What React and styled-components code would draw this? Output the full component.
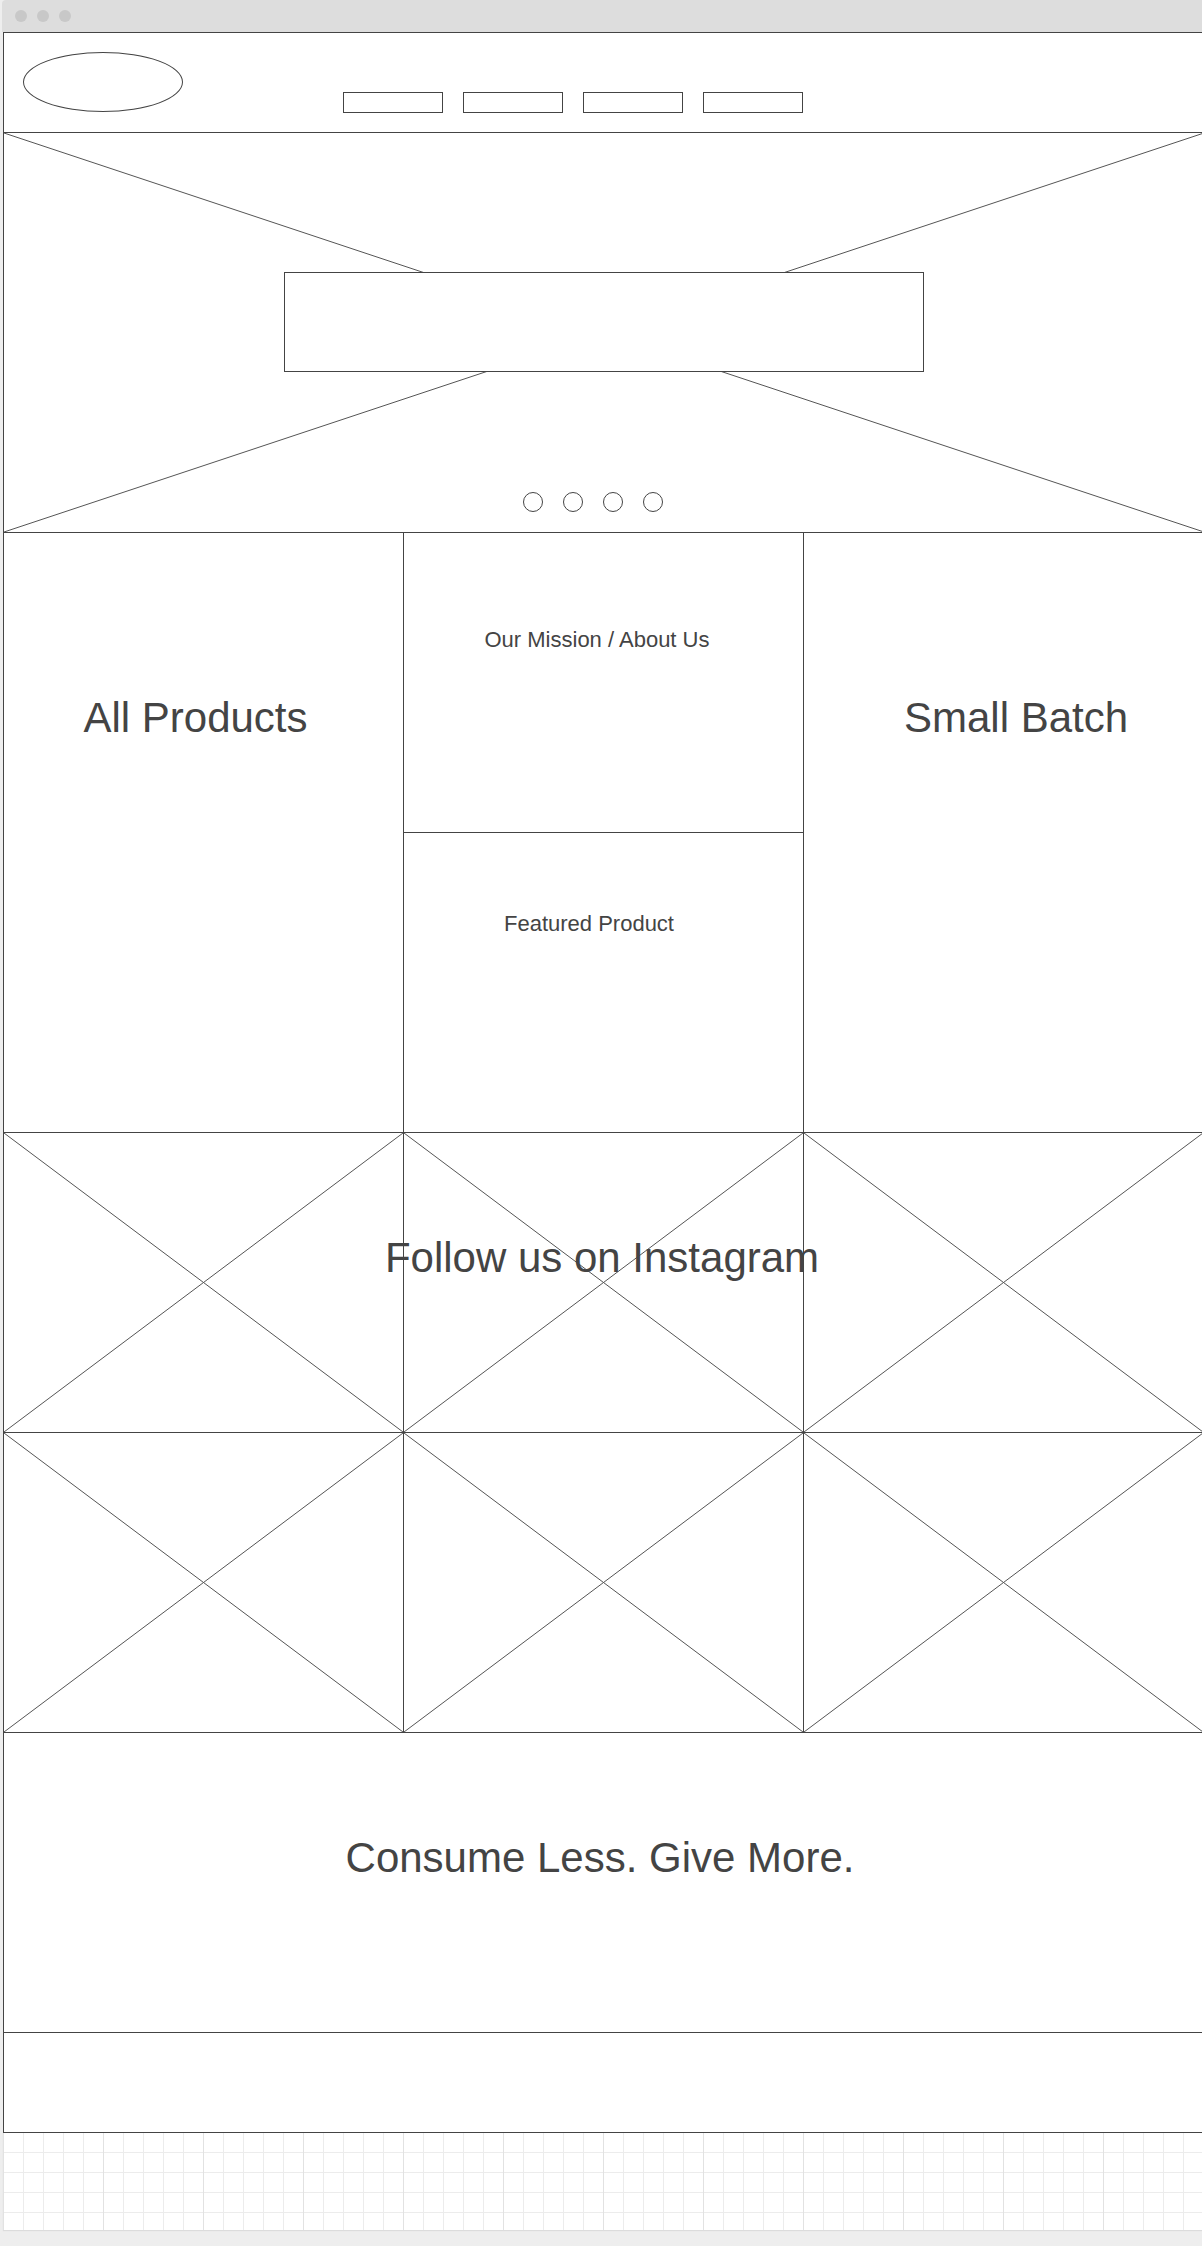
import React from 'react'
import styled, { createGlobalStyle } from 'styled-components'

const line = '#444'
const thin = '#555'

const GlobalStyle = createGlobalStyle`
    html, body {
        margin: 0;
        padding: 0;
        background: #eeeeee;
        overflow-x: hidden;
    }
    body {
        font-family: "Liberation Sans", Arial, sans-serif;
        color: #444;
    }
`

const Page = styled.div`
    width: 1202px;
    height: 2246px;
    overflow: hidden;
`

const Window = styled.div`
    margin-left: 3px;
    width: 1202px;
`

const TitleBar = styled.div`
    height: 32px;
    margin-left: -1px;
    background: #dddddd;
    border-radius: 4px 4px 0 0;
    display: flex;
    align-items: center;
    gap: 10px;
    padding-left: 13px;
    box-sizing: border-box;
`

const Light = styled.span`
    width: 12px;
    height: 12px;
    border-radius: 50%;
    background: #c8c8c8;
`

const Frame = styled.div`
    border: 1px solid ${line};
    background: #fff;
`

const Header = styled.header`
    height: 100px;
    box-sizing: border-box;
    border-bottom: 1px solid ${line};
    display: flex;
    align-items: flex-start;
`

const Logo = styled.div`
    width: 160px;
    height: 60px;
    box-sizing: border-box;
    border: 1px solid ${line};
    border-radius: 50%;
    margin: 19px 0 0 19px;
`

const Nav = styled.nav`
    display: flex;
    gap: 20px;
    margin: 59px 0 0 160px;
`

const NavItem = styled.div`
    width: 100px;
    height: 21px;
    box-sizing: border-box;
    border: 1px solid ${line};
`

const Hero = styled.section`
    position: relative;
    height: 400px;
    box-sizing: border-box;
    border-bottom: 1px solid ${line};
    display: flex;
    flex-direction: column;
    align-items: center;
    padding-top: 139px;
`

const Cross = styled.svg`
    position: absolute;
    inset: 0;
    width: 100%;
    height: 100%;
    pointer-events: none;
`

const Banner = styled.div`
    position: relative;
    width: 640px;
    height: 100px;
    box-sizing: border-box;
    border: 1px solid ${line};
    background: #fff;
`

const Dots = styled.div`
    position: relative;
    display: flex;
    gap: 20px;
    margin: 120px 22px 0 0;
`

const Dot = styled.span`
    width: 20px;
    height: 20px;
    box-sizing: border-box;
    border: 1px solid ${line};
    border-radius: 50%;
    background: #fff;
`

const Tiles = styled.section`
    display: grid;
    grid-template-columns: repeat(3, 400px);
    grid-template-rows: 300px 300px;
`

const Cell = styled.div`
    position: relative;
    box-sizing: border-box;
    border-right: 1px solid ${line};
    border-bottom: 1px solid ${line};
    grid-row: ${p => (p.$tall ? 'span 2' : 'auto')};
    padding-top: ${p => p.$pt || 0}px;
    padding-left: ${p => (p.$dx > 0 ? p.$dx * 2 : 0)}px;
    padding-right: ${p => (p.$dx < 0 ? -p.$dx * 2 : 0)}px;
    text-align: center;
`

const Label = styled.div`
    position: relative;
    font-size: ${p => p.$size}px;
    line-height: 1;
    white-space: nowrap;
    color: #444;
`

const Insta = styled.section`
    position: relative;
    display: grid;
    grid-template-columns: repeat(3, 400px);
    grid-template-rows: 300px 300px;
`

const InstaTitle = styled(Label)`
    position: absolute;
    top: 104px;
    left: 0;
    right: 4px;
    text-align: center;
`

const Slogan = styled.section`
    height: 300px;
    box-sizing: border-box;
    border-bottom: 1px solid ${line};
    padding: 104px 8px 0 0;
    text-align: center;
`

const Footer = styled.footer`
    height: 99px;
`

const Canvas = styled.div`
    margin-left: 3px;
    height: 97px;
    background-color: #fff;
    background-image:
        linear-gradient(to right, #e2e2e2 1px, transparent 1px),
        linear-gradient(to right, #ececec 1px, transparent 1px),
        linear-gradient(to bottom, #ececec 1px, transparent 1px);
    background-size: 100px 100px, 20px 20px, 20px 20px;
    background-position: 0 0, 0 0, 0 -1px;
    box-shadow: 0 1px 1px #dcdcdc;
`

function XMark() {
    return (
        <Cross viewBox="0 0 100 100" preserveAspectRatio="none">
            <line x1="0" y1="0" x2="100" y2="100" stroke={thin} strokeWidth="1" vectorEffect="non-scaling-stroke" />
            <line x1="100" y1="0" x2="0" y2="100" stroke={thin} strokeWidth="1" vectorEffect="non-scaling-stroke" />
        </Cross>
    )
}

export default function App() {
    return (
        <Page>
            <GlobalStyle />
            <Window>
                <TitleBar>
                    <Light />
                    <Light />
                    <Light />
                </TitleBar>
                <Frame>
                    <Header>
                        <Logo />
                        <Nav>
                            {[0, 1, 2, 3].map(i => <NavItem key={i} />)}
                        </Nav>
                    </Header>

                    <Hero>
                        <XMark />
                        <Banner />
                        <Dots>
                            {[0, 1, 2, 3].map(i => <Dot key={i} />)}
                        </Dots>
                    </Hero>

                    <Tiles>
                        <Cell $tall $pt={164} $dx={-8}>
                            <Label $size={42}>All Products</Label>
                        </Cell>
                        <Cell $pt={96} $dx={-6.5}>
                            <Label $size={22}>Our Mission / About Us</Label>
                        </Cell>
                        <Cell $tall $pt={164} $dx={12.5}>
                            <Label $size={42}>Small Batch</Label>
                        </Cell>
                        <Cell $pt={80} $dx={-14.5}>
                            <Label $size={22}>Featured Product</Label>
                        </Cell>
                    </Tiles>

                    <Insta>
                        {[0, 1, 2, 3, 4, 5].map(i => (
                            <Cell key={i}>
                                <XMark />
                            </Cell>
                        ))}
                        <InstaTitle $size={42}>Follow us on Instagram</InstaTitle>
                    </Insta>

                    <Slogan>
                        <Label $size={42}>Consume Less. Give More.</Label>
                    </Slogan>

                    <Footer />
                </Frame>
            </Window>
            <Canvas />
        </Page>
    )
}
